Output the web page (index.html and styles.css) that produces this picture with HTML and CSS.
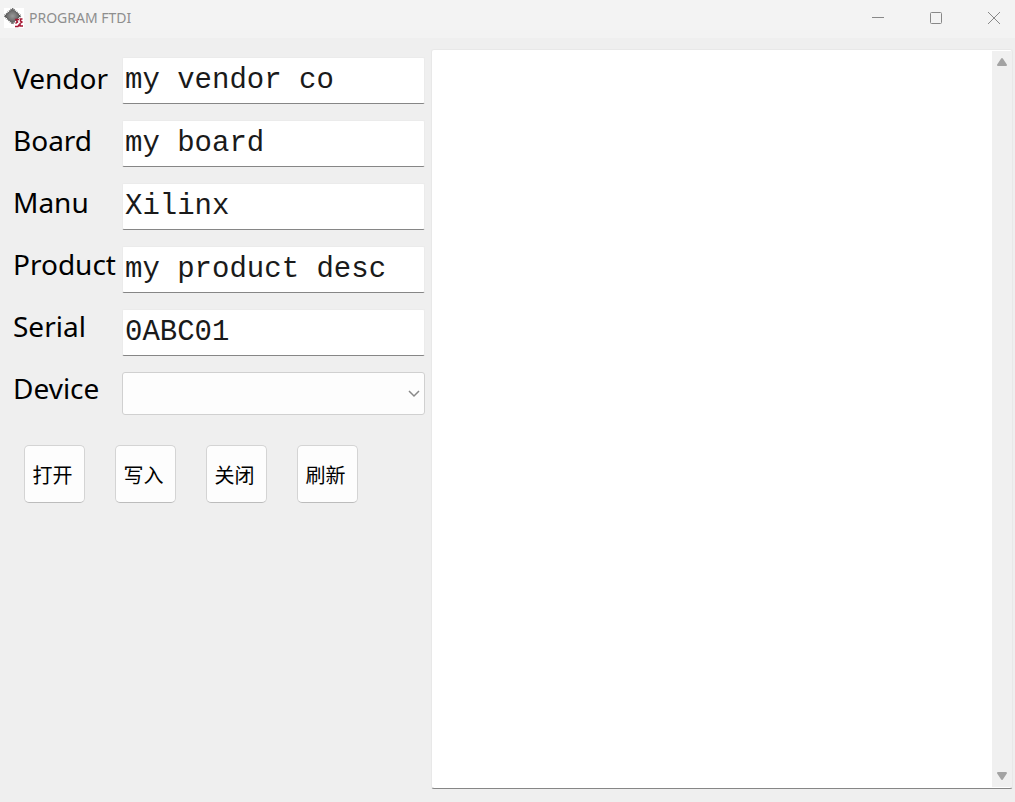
FILE: index.html
```html
<!DOCTYPE html>
<html lang="zh-CN">
<head>
<meta charset="utf-8">
<title>PROGRAM FTDI</title>
<link rel="stylesheet" href="styles.css">
</head>
<body>
<header class="titlebar">
  <svg class="app-icon" viewBox="0 0 20 20" aria-hidden="true">
    <defs>
      <radialGradient id="chip">
        <stop offset="0" stop-color="#999"/>
        <stop offset="1" stop-color="#5c5c5c"/>
      </radialGradient>
    </defs>
    <rect width="20" height="20" fill="#fff"/>
    <path d="M8.500 0 17 8 8.500 16 0 8Z" fill="none" stroke="#777" stroke-width="1.500" stroke-dasharray="1 1"/>
    <path d="M8.500 1 16 8 8.500 15 1 8Z" fill="url(#chip)" stroke="#555"/>
    <path d="M15 11.500h-3l1.500 2.500-2 1.500M11 18.500h3l1-2M18.500 11h-2v2l1.500 1-2 1.500v2.500h3" fill="none" stroke="#a51632" stroke-width="1.500"/>
  </svg>
  <h1 class="title">PROGRAM FTDI</h1>
  <div class="window-controls">
    <button class="window-button" type="button" aria-label="Minimize"><svg class="window-glyph" viewBox="0 0 14 14"><path d="M1 6.500h12"/></svg></button>
    <button class="window-button" type="button" aria-label="Maximize"><svg class="window-glyph" viewBox="0 0 14 14"><rect x="1.500" y="1.500" width="11" height="11" rx="1"/></svg></button>
    <button class="window-button" type="button" aria-label="Close"><svg class="window-glyph" viewBox="0 0 14 14"><path d="M1 1l12 12M13 1 1 13"/></svg></button>
  </div>
</header>
<main class="content">
  <form class="panel">
    <div class="form">
      <div class="labels">
        <label class="label" for="vendor">Vendor</label>
        <label class="label" for="board">Board</label>
        <label class="label" for="manu">Manu</label>
        <label class="label" for="product">Product</label>
        <label class="label" for="serial">Serial</label>
        <label class="label" for="device">Device</label>
      </div>
      <div class="fields">
        <input class="field" id="vendor" type="text" value="my vendor co" spellcheck="false">
        <input class="field" id="board" type="text" value="my board" spellcheck="false">
        <input class="field" id="manu" type="text" value="Xilinx" spellcheck="false">
        <input class="field" id="product" type="text" value="my product desc" spellcheck="false">
        <input class="field" id="serial" type="text" value="0ABC01" spellcheck="false">
        <div class="select-wrap">
          <select class="select" id="device"><option value=""></option></select>
          <svg class="chevron" viewBox="0 0 12 8" aria-hidden="true"><path d="M1 1l5 5 5-5"/></svg>
        </div>
      </div>
    </div>
    <div class="actions">
      <button class="action" type="button">打开</button>
      <button class="action" type="button">写入</button>
      <button class="action" type="button">关闭</button>
      <button class="action" type="button">刷新</button>
    </div>
  </form>
  <section class="log">
    <textarea class="log-text" aria-label="Log"></textarea>
    <div class="scrollbar">
      <button class="scroll-button" type="button" aria-label="Scroll up"><svg class="scroll-glyph" viewBox="0 0 12 10"><path d="M6 2l4 6H2Z"/></svg></button>
      <button class="scroll-button" type="button" aria-label="Scroll down"><svg class="scroll-glyph" viewBox="0 0 12 10"><path d="M6 8l4-6H2Z"/></svg></button>
    </div>
  </section>
</main>
</body>
</html>
```
FILE: styles.css
```css
* {
  box-sizing: border-box;
}

body {
  margin: 0;
  min-height: 100vh;
  display: flex;
  flex-direction: column;
  background: #efefef;
  color: #000;
  font-family: "Noto Sans", "Noto Sans CJK SC", sans-serif;
}

button {
  padding: 0;
  font-family: inherit;
}

.titlebar {
  display: flex;
  align-items: center;
  height: 38px;
  padding: 0 0 2px 4px;
  background: #f3f3f3;
}

.app-icon {
  width: 20px;
  height: 20px;
  margin-right: 5px;
}

.title {
  margin: 0;
  padding-bottom: 2px;
  font-size: 14px;
  font-weight: 400;
  color: #8e8e8e;
}

.window-controls {
  display: flex;
  gap: 16px;
  margin-left: auto;
}

.window-button {
  display: flex;
  align-items: center;
  justify-content: center;
  width: 42px;
  height: 36px;
  border: 0;
  background: transparent;
}

.window-glyph {
  width: 14px;
  height: 14px;
  fill: none;
  stroke: #888;
}

.content {
  flex: 1;
  display: grid;
  grid-template-columns: minmax(0, 425px) minmax(0, 1fr);
  gap: 6px;
  padding: 11px 2px 13px 0;
}

.panel {
  padding-top: 8px;
}

.form {
  display: grid;
  grid-template-columns: 109px minmax(0, 1fr);
  align-items: start;
  padding-left: 13px;
}

.labels {
  display: grid;
  gap: 22px;
  padding-top: 1px;
}

.label {
  font-size: 28px;
  line-height: 40px;
}

.fields {
  display: grid;
  gap: 16px;
}

.field {
  width: 100%;
  height: 47px;
  padding: 0 2px;
  border: 1px solid #ebebeb;
  border-bottom: 1px solid #868686;
  border-radius: 2px;
  background: #fff;
  color: #1a1a1a;
  font-family: "Liberation Mono", monospace;
  font-size: 29px;
}

.select-wrap {
  position: relative;
}

.select {
  display: block;
  width: 100%;
  height: 43px;
  appearance: none;
  border: 1px solid #d0d0d0;
  border-radius: 3px;
  background: #fdfdfd;
}

.chevron {
  position: absolute;
  right: 5px;
  top: 18px;
  width: 12px;
  height: 8px;
  fill: none;
  stroke: #888;
  stroke-width: 1.5;
  pointer-events: none;
}

.actions {
  display: flex;
  gap: 30px;
  padding: 30px 24px 0;
}

.action {
  width: 61px;
  height: 58px;
  border: 1px solid #d4d4d4;
  border-bottom-color: #bcbcbc;
  border-radius: 5px;
  background: #fdfdfd;
  color: #000;
  font-family: "Noto Sans CJK SC", sans-serif;
  font-size: 20px;
  padding-right: 4px;
}

.log {
  display: flex;
  border: 1px solid #e8e8e8;
  border-bottom: 1px solid #868686;
  border-radius: 3px;
  background: #fff;
}

.log-text {
  flex: 1;
  min-width: 0;
  border: 0;
  outline: 0;
  padding: 4px;
  resize: none;
  background: transparent;
  font-family: "Liberation Mono", monospace;
  font-size: 16px;
}

.scrollbar {
  display: flex;
  flex-direction: column;
  justify-content: space-between;
  width: 20px;
  margin: 1px 0;
  background: #f0f0f0;
}

.scroll-button {
  display: flex;
  align-items: center;
  justify-content: center;
  height: 22px;
  border: 0;
  background: transparent;
}

.scroll-glyph {
  width: 12px;
  height: 10px;
  fill: #a3a3a3;
  stroke: #a3a3a3;
  stroke-width: 2;
  stroke-linejoin: round;
}
```
